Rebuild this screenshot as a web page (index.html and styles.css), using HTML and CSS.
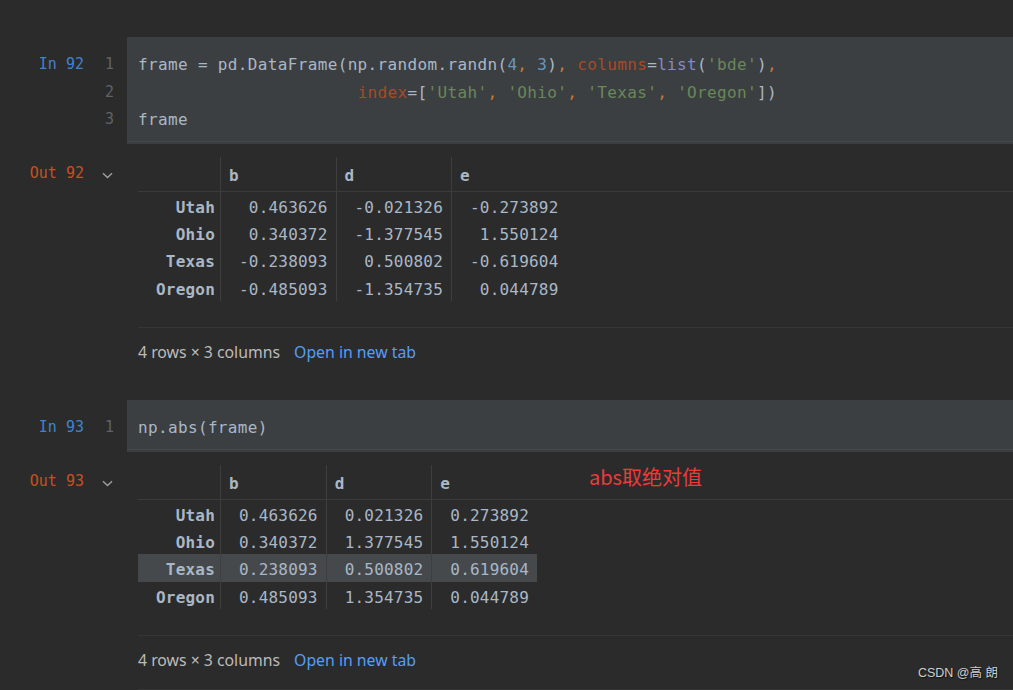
FILE: index.html
```html
<!DOCTYPE html>
<html>
<head>
<meta charset="utf-8">
<link rel="stylesheet" href="styles.css">
</head>
<body>
<div class="nb">
  <div class="cell cell-1">
    <div class="gutter">
      <div class="prompt in">In 92</div>
      <div class="linenos"><div>1</div><div>2</div><div>3</div></div>
    </div>
    <div class="code">
      <div class="ln">frame = pd.DataFrame(np.random.randn(<span class="num">4</span><span class="op">, </span><span class="num">3</span>)<span class="op">, </span><span class="kw">columns</span>=<span class="fn">list</span>(<span class="str">'bde'</span>)<span class="op">,</span></div>
      <div class="ln">                      <span class="kw">index</span>=[<span class="str">'Utah'</span><span class="op">, </span><span class="str">'Ohio'</span><span class="op">, </span><span class="str">'Texas'</span><span class="op">, </span><span class="str">'Oregon'</span>])</div>
      <div class="ln">frame</div>
    </div>
  </div>

  <div class="out out-1">
    <div class="out-gutter">
      <div class="prompt outp">Out 92</div>
      <svg class="chev" width="11" height="7" viewBox="0 0 11 7"><path d="M1 1.2 L5.5 5.5 L10 1.2" fill="none" stroke="#a0a0a0" stroke-width="1.4"/></svg>
    </div>
    <div class="out-body">
      <table class="df">
        <tr class="hd"><th class="idx"></th><th class="c">b</th><th class="c">d</th><th class="c">e</th><th class="fill"></th></tr>
        <tr><td class="idx">Utah</td><td class="v">0.463626</td><td class="v">-0.021326</td><td class="v">-0.273892</td><td class="fill"></td></tr>
        <tr><td class="idx">Ohio</td><td class="v">0.340372</td><td class="v">-1.377545</td><td class="v">1.550124</td><td class="fill"></td></tr>
        <tr><td class="idx">Texas</td><td class="v">-0.238093</td><td class="v">0.500802</td><td class="v">-0.619604</td><td class="fill"></td></tr>
        <tr><td class="idx">Oregon</td><td class="v">-0.485093</td><td class="v">-1.354735</td><td class="v">0.044789</td><td class="fill"></td></tr>
      </table>
      <div class="foot"><span class="dims">4 rows × 3 columns</span><span class="link">Open in new tab</span></div>
    </div>
  </div>

  <div class="cell cell-2">
    <div class="gutter">
      <div class="prompt in">In 93</div>
      <div class="linenos"><div>1</div></div>
    </div>
    <div class="code">
      <div class="ln">np.abs(frame)</div>
    </div>
  </div>

  <div class="out out-2">
    <div class="out-gutter">
      <div class="prompt outp">Out 93</div>
      <svg class="chev" width="11" height="7" viewBox="0 0 11 7"><path d="M1 1.2 L5.5 5.5 L10 1.2" fill="none" stroke="#a0a0a0" stroke-width="1.4"/></svg>
    </div>
    <div class="out-body">
      <table class="df">
        <tr class="hd"><th class="idx"></th><th class="c">b</th><th class="c">d</th><th class="c">e</th><th class="fill"></th></tr>
        <tr><td class="idx">Utah</td><td class="v">0.463626</td><td class="v">0.021326</td><td class="v">0.273892</td><td class="fill"></td></tr>
        <tr><td class="idx">Ohio</td><td class="v">0.340372</td><td class="v">1.377545</td><td class="v">1.550124</td><td class="fill"></td></tr>
        <tr class="hl"><td class="idx">Texas</td><td class="v">0.238093</td><td class="v">0.500802</td><td class="v">0.619604</td><td class="fill"></td></tr>
        <tr><td class="idx">Oregon</td><td class="v">0.485093</td><td class="v">1.354735</td><td class="v">0.044789</td><td class="fill"></td></tr>
      </table>
      <div class="foot foot-last"><span class="dims">4 rows × 3 columns</span><span class="link">Open in new tab</span></div>
    </div>
    <div class="note">abs取绝对值</div>
  </div>
</div>
<div class="watermark">CSDN @高 朗</div>
</body>
</html>
```

FILE: styles.css
```css
html, body {
  margin: 0;
  padding: 0;
  background: #2b2b2b;
  width: 1013px;
  height: 690px;
  overflow: hidden;
}

.nb {
  padding-top: 37px;
}

.cell {
  display: flex;
}

.gutter {
  width: 127px;
  flex: none;
  display: flex;
  font-family: "DejaVu Sans Mono", monospace;
  font-size: 15px;
}

.prompt {
  width: 84px;
  text-align: right;
  line-height: 27.5px;
  font-family: "DejaVu Sans Mono", monospace;
  font-size: 15px;
}

.cell-1 .gutter { padding-top: 14px; }
.cell-2 .gutter { padding-top: 14px; }

.prompt.in { color: #3f82d1; }
.prompt.outp { color: #c75023; line-height: 32px; }

.linenos {
  width: 30px;
  text-align: right;
  color: #5f6366;
  line-height: 27.5px;
}

.code {
  flex: 1;
  background: #3c3f41;
  padding-left: 11px;
  font-family: "DejaVu Sans Mono", monospace;
  font-size: 16px;
  letter-spacing: 0.35px;
  color: #a9b7c6;
  box-shadow: inset 0 -2px 0 #3c3f41, inset 0 -3px 0 #45484b;
}

.cell-1 .code { padding-top: 14px; padding-bottom: 10.5px; }
.cell-2 .code { padding-top: 14px; padding-bottom: 10.5px; }
.cell-2 { margin-top: 38px; }

.ln {
  white-space: pre;
  line-height: 27.5px;
  height: 27.5px;
}

.num { color: #6897bb; }
.op { color: #cc7832; }
.kw { color: #aa4926; }
.fn { color: #8888c6; }
.str { color: #6a8759; }

.out {
  display: flex;
  margin-top: 13px;
  position: relative;
}

.out-gutter {
  width: 138px;
  flex: none;
  display: flex;
  align-items: flex-start;
}

.chev {
  margin-left: 18px;
  margin-top: 15px;
}

.out-body {
  flex: 1;
}

.df {
  border-collapse: collapse;
  width: 100%;
  font-family: "DejaVu Sans Mono", monospace;
  font-size: 16px;
  letter-spacing: 0.2px;
  color: #a9b7c6;
  white-space: nowrap;
}

.df th, .df td {
  padding-top: 5px;
  padding-bottom: 0;
  line-height: 18px;
  vertical-align: middle;
}

.df tr.hd { height: 34px; }
.df tr { height: 27.5px; }

.df th {
  text-align: left;
  font-weight: bold;
  border-bottom: 1px solid #3b3b3b;
}

.df th.c {
  padding-left: 8px;
  padding-right: 8px;
  border-left: 1px solid #3e3e3e;
}

.df .idx {
  text-align: right;
  font-weight: bold;
  padding-left: 18px;
  padding-right: 5px;
}

.df td.v {
  text-align: right;
  padding-left: 18px;
  padding-right: 8px;
  border-left: 1px solid #3e3e3e;
}

.df .fill {
  width: 100%;
  padding: 0;
}

.df tr.hl td.idx,
.df tr.hl td.v {
  background: #46494c;
}

.foot {
  margin-top: 26px;
  border-top: 1px solid #363636;
  padding-top: 14px;
  display: flex;
  gap: 14px;
  font-family: "Noto Sans", "Open Sans", sans-serif;
  font-size: 15.8px;
  line-height: 20px;
  height: 20px;
}

.foot-last {
  padding-bottom: 19px;
  border-bottom: 1px solid #363636;
}

.dims { color: #bbbbbb; }
.link { color: #589df6; }

.note {
  position: absolute;
  left: 589px;
  top: 0;
  line-height: 24px;
  font-family: "Noto Sans CJK SC", sans-serif;
  font-size: 20px;
  color: #f03a3a;
}

.watermark {
  position: absolute;
  right: 15px;
  top: 664px;
  font-family: "Liberation Sans", "Noto Sans CJK SC", sans-serif;
  font-size: 12.5px;
  line-height: 18px;
  color: #cfcfcf;
  text-shadow: 1px 1px 1px #111;
}
```
